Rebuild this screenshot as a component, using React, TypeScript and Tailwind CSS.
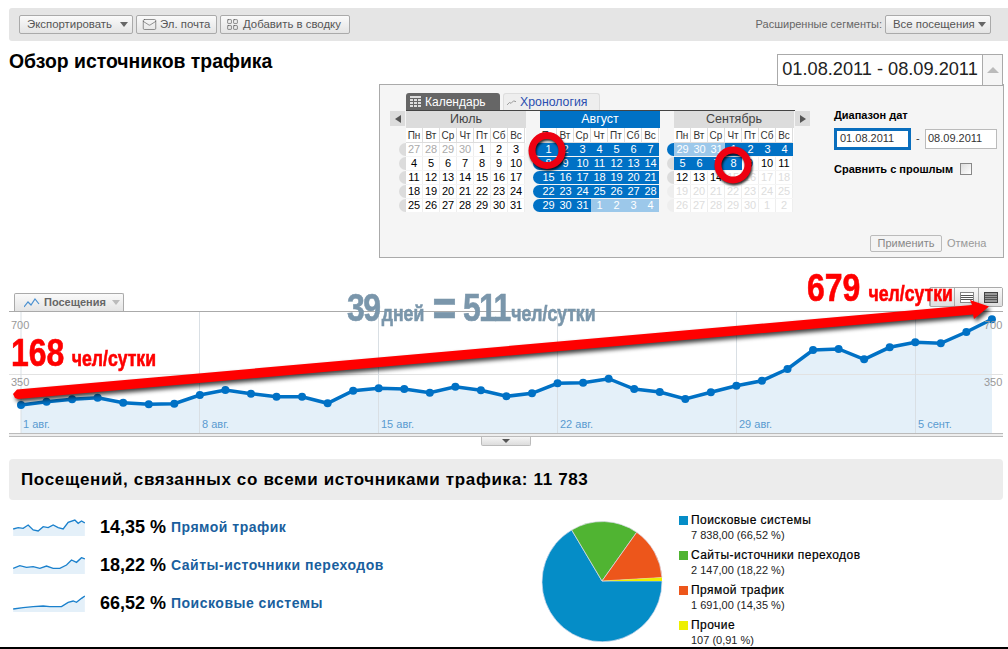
import { Mail, LayoutGrid } from 'lucide-react';

const weekDays = ['Пн', 'Вт', 'Ср', 'Чт', 'Пт', 'Сб', 'Вс'];

const toneClass: Record<string, string> = {
  n: 'bg-white text-black border-r border-[#eee]',
  o: 'bg-white text-[#aaa] border-r border-[#eee]',
  f: 'bg-white text-[#ddd] border-r border-[#eee]',
  s: 'bg-[#0071c5] text-white',
  l: 'bg-[#9cc8ea] text-white',
};

const pillClass: Record<string, string> = {
  g: 'bg-[#dcdcdc]',
  b: 'bg-[#0071c5]',
  f: 'bg-[#eeeeee]',
};

const months = [
  {
    name: 'Июль',
    active: false,
    rows: [
      ['27 28 29 30 1 2 3', 'oooonnn', 'g'],
      ['4 5 6 7 8 9 10', 'nnnnnnn', 'g'],
      ['11 12 13 14 15 16 17', 'nnnnnnn', 'g'],
      ['18 19 20 21 22 23 24', 'nnnnnnn', 'g'],
      ['25 26 27 28 29 30 31', 'nnnnnnn', 'g'],
    ],
  },
  {
    name: 'Август',
    active: true,
    rows: [
      ['1 2 3 4 5 6 7', 'sssssss', 'b'],
      ['8 9 10 11 12 13 14', 'sssssss', 'b'],
      ['15 16 17 18 19 20 21', 'sssssss', 'b'],
      ['22 23 24 25 26 27 28', 'sssssss', 'b'],
      ['29 30 31 1 2 3 4', 'sssllll', 'b'],
    ],
  },
  {
    name: 'Сентябрь',
    active: false,
    rows: [
      ['29 30 31 1 2 3 4', 'lllssss', 'b'],
      ['5 6 7 8 9 10 11', 'ssssnnn', 'g'],
      ['12 13 14 15 16 17 18', 'nnnffff', 'g'],
      ['19 20 21 22 23 24 25', 'fffffff', 'f'],
      ['26 27 28 29 30 1 2', 'fffffff', 'f'],
    ],
  },
];

const visits = [
  405, 401.7, 399.3, 397.7, 402.7, 404.3, 403.7, 395, 390, 393.7, 396.7, 396.7, 403.3, 390.7, 388.3, 389, 392.7, 386.7,
  390.3, 396.3, 393.3, 383.3, 382.7, 378.7, 389, 392, 399, 392.3, 385.7, 380.7, 369, 350, 349, 359.3, 347.3, 342.3,
  343.3, 332, 319.3,
];
const chartPoints = visits.map((y, i) => [21 + i * 25.55, y]);
const chartLine = chartPoints.map((p) => p.join(',')).join(' ');

const axisDates = [
  [23, '1 авг.'],
  [202, '8 авг.'],
  [381, '15 авг.'],
  [560, '22 авг.'],
  [739, '29 авг.'],
  [918, '5 сент.'],
] as const;

const sources = [
  {
    pct: '14,35 %',
    label: 'Прямой трафик',
    box: '40 202 215 51',
    line: '40,232 55,228 70,230 85,220 100,235 115,238 130,225 145,228 160,220 175,228 190,232 205,212 225,205 235,215 245,208 255,214',
    floor: 253,
  },
  {
    pct: '18,22 %',
    label: 'Сайты-источники переходов',
    box: '40 316 215 51',
    line: '40,350 60,342 80,347 100,345 120,350 140,343 160,350 180,350 200,340 215,325 230,332 245,318 255,322',
    floor: 367,
  },
  {
    pct: '66,52 %',
    label: 'Поисковые системы',
    box: '40 430 215 51',
    line: '40,472 70,468 100,465 130,463 150,465 185,465 205,452 220,448 230,452 245,440 255,433',
    floor: 481,
  },
];

const legend = [
  ['bg-[#058dc7]', 'Поисковые системы', '7 838,00 (66,52 %)'],
  ['bg-[#50b432]', 'Сайты-источники переходов', '2 147,00 (18,22 %)'],
  ['bg-[#ed561b]', 'Прямой трафик', '1 691,00 (14,35 %)'],
  ['bg-[#edef00]', 'Прочие', '107 (0,91 %)'],
];

const buttonClass =
  'flex h-[19px] items-center whitespace-nowrap rounded-[2px] border border-[#aaa] bg-gradient-to-b from-[#fafafa] to-[#e4e4e4] text-[11.4px] text-[#555]';

function Caret() {
  return <span className="ml-auto mr-[4px] h-0 w-0 border-x-[4px] border-t-[5px] border-x-transparent border-t-[#666]" />;
}

function Month({ month }: { month: (typeof months)[number] }) {
  return (
    <div className="w-[127px]">
      <div
        className={`ml-[7px] flex h-[17px] items-center justify-center text-[12.5px] ${
          month.active ? 'bg-[#0071c5] text-white' : 'bg-[#dcdcdc] text-[#444]'
        }`}
      >
        {month.name}
      </div>
      <div className="ml-[7px] flex h-[15px] bg-white">
        {weekDays.map((d) => (
          <span
            key={d}
            className="flex h-[15px] w-[17px] items-center justify-center border-r border-b border-[#ddd] text-[10px] text-[#333]"
          >
            {d}
          </span>
        ))}
      </div>
      <div className="flex flex-col gap-y-px">
        {month.rows.map(([days, tones, pill]) => (
          <div key={days} className="flex">
            <span className={`h-[13px] w-[7px] rounded-l-full ${pillClass[pill]}`} />
            {days.split(' ').map((d, i) => (
              <span
                key={d + i}
                className={`flex h-[13px] w-[17px] items-center justify-center text-[11px] ${toneClass[tones[i]]}`}
              >
                {d}
              </span>
            ))}
          </div>
        ))}
      </div>
    </div>
  );
}

function CalendarPanel() {
  return (
    <div className="ml-[379px] flex h-[174px] w-[625px] -mt-px border border-[#aaa] bg-[#f5f5f5] pt-2">
      <div className="w-[454px] pl-[10px]">
        <div className="ml-[16px] flex h-[18px] w-[389px] gap-[3px] border-b border-[#444]">
          <div className="flex h-[17px] w-[94px] items-center gap-1 rounded-t-[3px] bg-[#666] pl-1 text-[12px] text-white">
            <svg width="11" height="11" viewBox="0 0 11 11" fill="#ddd">
              <path d="M0 0h11v2H0zM0 3h3v2H0zM4 3h3v2H4zM8 3h3v2H8zM0 6h3v2H0zM4 6h3v2H4zM8 6h3v2H8zM0 9h3v2H0zM4 9h3v2H4zM8 9h3v2H8z" />
            </svg>
            Календарь
          </div>
          <div className="flex h-[17px] w-[97px] items-center gap-[4px] rounded-t-[3px] border border-b-0 border-[#ddd] bg-[#eee] pl-[3px] text-[12.3px] text-[#2a4fb0]">
            <svg width="9" height="7" viewBox="0 0 11 8" fill="none" stroke="#888" strokeWidth="1">
              <path d="M0 7l3-3 2 1 3-3 3 1" />
            </svg>
            Хронология
          </div>
        </div>
        <div className="flex">
          <div className="relative z-10 mr-[-6px] flex h-[15px] w-[15px] items-center justify-center bg-[#dcdcdc]">
            <span className="h-0 w-0 border-y-[4px] border-r-[6px] border-y-transparent border-r-[#555]" />
          </div>
          <div className="flex gap-[7px]">
            {months.map((m) => (
              <Month key={m.name} month={m} />
            ))}
          </div>
          <div className="ml-px flex h-[15px] w-[15px] items-center justify-center bg-[#dcdcdc]">
            <span className="h-0 w-0 border-y-[4px] border-l-[6px] border-y-transparent border-l-[#555]" />
          </div>
        </div>
      </div>
      <div className="flex flex-1 flex-col pb-[5px] pt-[14px] text-[11px] text-black">
        <div className="font-bold">Диапазон дат</div>
        <div className="mt-[4px] flex items-center">
          <div className="flex h-[22px] w-[77px] items-center border-[3px] border-[#0a6ebd] bg-white pl-[3px] text-[11px] text-[#333]">
            01.08.2011
          </div>
          <span className="mx-[5px] w-[4px] text-[#333]">-</span>
          <div className="flex h-[20px] w-[72px] items-center border border-[#bbb] bg-white pl-[2px] text-[11px] text-[#333]">
            08.09.2011
          </div>
        </div>
        <div className="mt-[11px] flex items-center gap-[7px]">
          <span className="font-bold">Сравнить с прошлым</span>
          <span className="h-[12px] w-[12px] border border-[#888] bg-gradient-to-br from-[#ddd] to-[#fff]" />
        </div>
        <div className="mt-auto ml-[36px] flex items-center gap-[5px]">
          <span className="flex h-[17px] w-[72px] items-center justify-center rounded-[2px] border border-[#bbb] bg-[#f4f4f4] text-[#888]">
            Применить
          </span>
          <span className="text-[#999]">Отмена</span>
        </div>
      </div>
    </div>
  );
}

function VisitsChart() {
  return (
    <svg width="994" height="122" viewBox="9 311 994 122" className="block">
      <rect x="9" y="311" width="994" height="122" fill="#fff" />
      <polygon points={`21,433 ${chartLine} 992,433`} fill="#e4f0f9" />
      <line x1="9" x2="1003" y1="374.5" y2="374.5" stroke="#e2e2e2" />
      {[21, 199.5, 378.5, 557.5, 736.5, 915.5].map((x) => (
        <line key={x} x1={x} x2={x} y1="311" y2="433" stroke="#d9dfe4" />
      ))}
      <line x1="9" x2="1003" y1="311.5" y2="311.5" stroke="#aaa" />
      <polyline points={chartLine} fill="none" stroke="#0071c5" strokeWidth="3.5" />
      {chartPoints.map(([x, y]) => (
        <circle key={x} cx={x} cy={y} r="4" fill="#0071c5" />
      ))}
      <g fontSize="11" fill="#999">
        <text x="11" y="329">700</text>
        <text x="11" y="386">350</text>
        <text x="984" y="329">700</text>
        <text x="984" y="386">350</text>
      </g>
      <g fontSize="11" fill="#5a9bd0">
        {axisDates.map(([x, t]) => (
          <text key={t} x={x} y="428">{t}</text>
        ))}
      </g>
    </svg>
  );
}

function ViewButton({ dark, plain }: { dark?: boolean; plain?: boolean }) {
  return (
    <span className="flex h-[18px] w-[24px] items-center justify-center border-l border-[#aaa] bg-gradient-to-b from-[#fafafa] to-[#ddd]">
      {!plain && (
        <span className={`flex h-[11px] w-[14px] flex-col justify-between border ${dark ? 'border-[#444] bg-[#999]' : 'border-[#888] bg-white'}`}>
          <span className="mt-[2px] h-px bg-[#555]" />
          <span className="h-px bg-[#555]" />
          <span className="mb-[2px] h-px bg-[#555]" />
        </span>
      )}
    </span>
  );
}

function Sparkline({ box, line, floor }: { box: string; line: string; floor: number }) {
  const xs = box.split(' ');
  return (
    <svg width="72" height="17" viewBox={box} className="shrink-0">
      <polygon points={`${xs[0]},${floor} ${line} 255,${floor}`} fill="#e4f0f9" />
      <polyline points={line} fill="none" stroke="#1a80cc" strokeWidth="4" />
    </svg>
  );
}

function Annotations() {
  // no condensed font is installed, so the hand-added labels get squeezed
  const condensed = 'origin-left scale-x-[0.82] whitespace-nowrap font-bold leading-[42px] [-webkit-text-stroke:0.6px]';
  return (
    <>
      <svg width="1008" height="649" viewBox="0 0 1008 649" className="pointer-events-none absolute inset-0">
        <g className="drop-shadow-[2px_3px_2px_rgba(0,0,0,0.75)]">
          <polygon
            points="17,389.5 972,305 970,300 989,306.5 974,319 973,314.5 18,399 15,398 13,394"
            fill="#ff0000"
          />
        </g>
        <g fill="none" stroke="#ee0011" strokeWidth="7" className="drop-shadow-[1px_2px_1px_rgba(0,0,0,0.8)]">
          <circle cx="547" cy="150.5" r="15" />
          <circle cx="733" cy="165" r="15" />
        </g>
      </svg>
      <div className={`absolute left-[11px] top-[332px] flex items-baseline gap-[9px] text-[#ff0000] ${condensed}`}>
        <span className="text-[39px]">168</span>
        <span className="text-[21.5px]">чел/сутки</span>
      </div>
      <div className={`absolute left-[807px] top-[267px] flex items-baseline gap-[10px] text-[#ff0000] ${condensed}`}>
        <span className="text-[39px]">679</span>
        <span className="text-[21.5px]">чел/сутки</span>
      </div>
      <div className={`absolute left-[347px] top-[283px] flex items-baseline text-[#7a96ab] ${condensed}`}>
        <span className="text-[39px] tracking-[-2px]">39</span>
        <span className="ml-[3px] text-[21.5px]">дней</span>
        <span className="ml-[10px] translate-y-[5px] text-[50px]">=</span>
        <span className="ml-[8px] text-[39px] tracking-[-2px]">511</span>
        <span className="ml-[2px] text-[21.5px]">чел/сутки</span>
      </div>
    </>
  );
}

export default function App() {
  return (
    <div className="relative h-[649px] w-[1008px] overflow-hidden bg-white pt-2 font-['Liberation_Sans',Arial,sans-serif]">
      {/* Toolbar */}
      <div className="ml-[9px] flex h-[33px] items-center rounded-l-[3px] bg-[#e5e5e5] pl-[10px] pr-[17px]">
        <div className="flex gap-[3px]">
          <div className={`${buttonClass} w-[114px] pl-[7px]`}>
            Экспортировать <Caret />
          </div>
          <div className={`${buttonClass} w-[81px] gap-[3px] pl-[5px]`}>
            <Mail size={15} strokeWidth={1} />
            Эл. почта
          </div>
          <div className={`${buttonClass} w-[130px] gap-[4px] pl-[5px]`}>
            <LayoutGrid size={13} strokeWidth={1.2} />
            Добавить в сводку
          </div>
        </div>
        <span className="ml-auto mr-[3px] text-[11px] text-[#666]">Расширенные сегменты:</span>
        <div className={`${buttonClass} w-[106px] pl-[7px] text-[#444]`}>
          Все посещения <Caret />
        </div>
      </div>

      {/* Title and date */}
      <div className="flex h-[44px] items-start justify-between pr-[5px]">
        <h1 className="ml-[9px] mt-[9px] text-[19.4px] font-bold leading-[22px] text-black">Обзор источников трафика</h1>
        <div className="relative z-10 mt-[13px] flex h-[32px]">
          <div className="flex w-[206px] items-center justify-center whitespace-nowrap border border-[#aaa] bg-white text-[18.2px] text-[#222]">
            01.08.2011 - 08.09.2011
          </div>
          <div className="flex w-[20px] items-center justify-center border-y border-r border-[#aaa] bg-[#f5f5f5]">
            <span className="h-0 w-0 border-x-[6px] border-b-[6px] border-x-transparent border-b-[#bbb]" />
          </div>
        </div>
      </div>

      <CalendarPanel />

      {/* Visits chart */}
      <div className="ml-[9px] mt-[35px] w-[994px]">
        <div className="flex h-[18px] items-end justify-between">
          <div className="ml-[5px] flex h-[18px] w-[110px] items-center gap-[4px] rounded-t-[2px] border border-b-0 border-[#aaa] bg-gradient-to-b from-[#fafafa] to-[#e4e4e4] pl-[9px] text-[11px] font-bold text-[#666]">
            <svg width="16" height="10" viewBox="0 0 16 10" fill="none" stroke="#4a90d0" strokeWidth="1.2">
              <path d="M0 9l4-5 3 3 4-6 4 5" />
            </svg>
            Посещения
            <span className="ml-[2px] h-0 w-0 border-x-[4px] border-t-[5px] border-x-transparent border-t-[#bbb]" />
          </div>
          <div className="mb-[4px] flex rounded-[2px] border border-[#aaa]">
            <ViewButton plain />
            <ViewButton />
            <ViewButton dark />
          </div>
        </div>
        <VisitsChart />
        <div className="h-[4px] border-y border-[#bbb] bg-[#eee]" />
        <div className="ml-[472px] flex h-[9px] w-[50px] items-center justify-center rounded-b-[2px] border border-t-0 border-[#bbb] bg-gradient-to-b from-[#f5f5f5] to-[#ddd]">
          <span className="h-0 w-0 border-x-[4px] border-t-[4px] border-x-transparent border-t-[#555]" />
        </div>
      </div>

      {/* Traffic summary */}
      <div className="ml-[9px] mt-[13px] flex h-[41px] w-[994px] items-center rounded-[4px] bg-[#ececec] pl-[12px] text-[17px] font-bold tracking-[0.65px] text-black">
        Посещений, связанных со всеми источниками трафика: 11 783
      </div>

      <div className="flex">
        <div className="ml-[13px] mt-[19px] flex w-[520px] flex-col gap-[21px]">
          {sources.map((s) => (
            <div key={s.label} className="flex h-[17px] items-center">
              <Sparkline box={s.box} line={s.line} floor={s.floor} />
              <span className="ml-[15px] w-[71px] text-[18px] font-bold text-black">{s.pct}</span>
              <span className="text-[14px] font-bold tracking-[0.5px] text-[#1a5f9e]">{s.label}</span>
            </div>
          ))}
        </div>
        <svg width="122" height="122" viewBox="-61 -61 122 122" className="ml-[8px] mt-[20px] shrink-0">
          <path d="M0 0L60 0A60 60 0 1 1 -30.3 -51.0Z" fill="#058dc7" stroke="#dde" strokeWidth="0.7" />
          <path d="M0 0L-30.3 -51.0A60 60 0 0 1 34.7 -48.7Z" fill="#50b432" stroke="#dde" strokeWidth="0.7" />
          <path d="M0 0L34.7 -48.7A60 60 0 0 1 60 -3.4Z" fill="#ed561b" stroke="#dde" strokeWidth="0.7" />
          <path d="M0 0L60 -3.4A60 60 0 0 1 60 0Z" fill="#edef00" />
        </svg>
        <div className="ml-[16px] mt-[13px] flex flex-col text-black">
          {legend.map(([color, name, value]) => (
            <div key={name} className="h-[35px]">
              <div className="flex items-center gap-[3px] text-[12px] leading-[15px] tracking-[0.45px]">
                <span className={`h-[9px] w-[9px] ${color}`} />
                <span className="[-webkit-text-stroke:0.2px]">{name}</span>
              </div>
              <div className="pl-[12px] text-[11px] leading-[15px] text-[#222]">{value}</div>
            </div>
          ))}
        </div>
      </div>

      <Annotations />
      <div className="absolute bottom-0 left-0 h-[2px] w-full bg-black" />
    </div>
  );
}
